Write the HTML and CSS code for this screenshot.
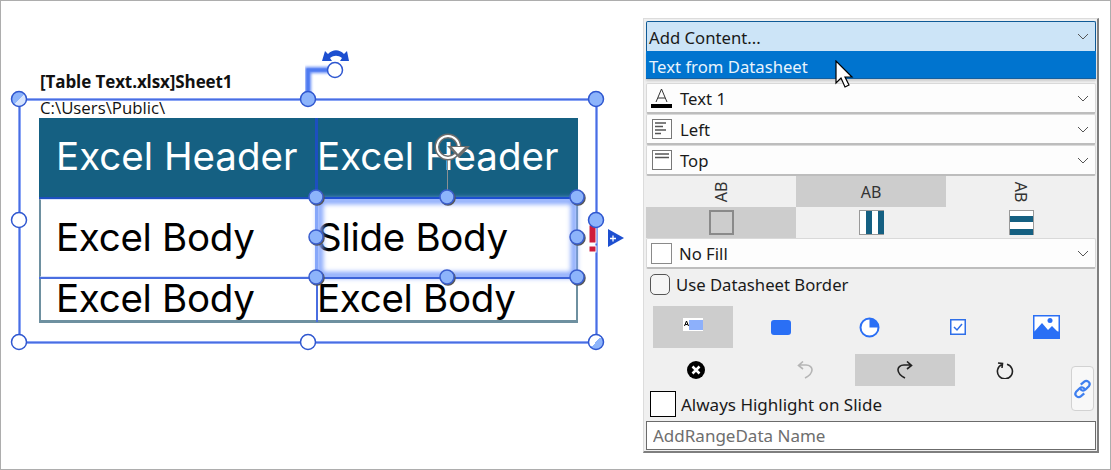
FILE: index.html
```html
<!DOCTYPE html>
<html lang="en">
<head>
    <meta charset="UTF-8">
    <meta name="viewport" content="width=device-width, initial-scale=1.0">
    <title>Table Text</title>
    <link rel="stylesheet" href="styles.css">
</head>
<body>
    <div class="page">
        <div class="slide">
            <div class="sheet-name">[Table Text.xlsx]Sheet1</div>
            <div class="sheet-path">C:\Users\Public\</div>
            <div class="sheet-table">
                <div class="cell head">Excel Header</div>
                <div class="cell head second">Excel Header</div>
                <div class="cell">Excel Body</div>
                <div class="cell second">Slide Body</div>
                <div class="cell short">Excel Body</div>
                <div class="cell short second">Excel Body</div>
            </div>

            <svg class="overlay" width="642" height="468" viewBox="0 0 642 468">
                <defs>
                    <filter id="soft" x="-10%" y="-30%" width="120%" height="160%"><feGaussianBlur stdDeviation="1.600"/></filter>
                    <filter id="softer" x="-10%" y="-30%" width="120%" height="160%"><feGaussianBlur stdDeviation="2.500"/></filter>
                    <linearGradient id="halfLight" x1="0" y1="0" x2="1" y2="1">
                        <stop offset="0.5" stop-color="#fff"/><stop offset="0.5" stop-color="#8db4fb"/>
                    </linearGradient>
                    <linearGradient id="halfBlue" x1="0" y1="0" x2="1" y2="1">
                        <stop offset="0.5" stop-color="#8db4fb"/><stop offset="0.5" stop-color="#d6e4fd"/>
                    </linearGradient>
                </defs>

                <!-- outer selection frame -->
                <rect x="19.500" y="99.500" width="577" height="243" fill="none" stroke="#8aa4f5" stroke-width="3"/>
                <rect x="19.500" y="99.500" width="577" height="243" fill="none" stroke="#4a6ee0" stroke-width="1"/>

                <!-- rotate connector -->
                <path d="M308 98V70H334" fill="none" stroke="#5d86f5" stroke-width="6" filter="url(#soft)"/>
                <path d="M308 98V70H334" fill="none" stroke="#4f7bf0" stroke-width="3"/>

                <!-- table row lines drawn by the selection -->
                <rect x="39" y="197" width="278" height="2" fill="#1d4fbf"/>
                <rect x="39" y="277" width="278" height="2" fill="#4a6ee0"/>
                <rect x="316" y="278" width="2" height="44" fill="#4a6ee0"/>

                <!-- selected cell -->
                <rect x="320" y="201" width="254" height="74" fill="none" stroke="#7fa2fc" stroke-width="6" filter="url(#softer)"/>
                <rect x="316" y="197" width="261" height="2" fill="#1d4fd0"/>
                <rect x="316" y="277" width="261" height="2" fill="#3c63d8"/>
                <rect x="315" y="118" width="3" height="80" fill="#1d4fbf"/>
                <rect x="315" y="198" width="3" height="80" fill="#86a7fa"/>

                <!-- cell rotate cursor -->
                <path d="M447.500 160V197" stroke="#8a8f92" stroke-width="1"/>
                <g fill="none">
                    <circle cx="448" cy="147" r="11" stroke="#6c6c6c" stroke-width="5"/>
                    <circle cx="448" cy="147" r="11" stroke="#fff" stroke-width="2"/>
                    <path d="M447 146H470L459 158Z" fill="#6c6c6c"/>
                    <path d="M452 147H465L458 154Z" fill="#fff"/>
                </g>

                <!-- warning mark and add arrow -->
                <rect x="589" y="225" width="7" height="18" fill="#cf1d3c" stroke="#fff" stroke-width="1"/>
                <rect x="589" y="246" width="7" height="6" fill="#cf1d3c" stroke="#fff" stroke-width="1"/>
                <path d="M608 229L624 238L608 247Z" fill="#1d4fd0"/>
                <path d="M610 238.500H616M613 235.500V241.500" stroke="#fff" stroke-width="1.300"/>

                <!-- rotate arrows -->
                <path d="M322 61L325 51L328 54C333 49 339 49 344 54L347 51L349 61H340L342 58C338 55 334 55 330 58L332 61Z" fill="#1d4fd0"/>

                <g class="h-cell">
                    <circle cx="316" cy="197" r="7"/><circle cx="447" cy="197" r="7"/><circle cx="577" cy="197" r="7"/>
                    <circle cx="316" cy="237" r="7"/><circle cx="577" cy="237" r="7"/>
                    <circle cx="316" cy="277" r="7"/><circle cx="447" cy="277" r="7"/><circle cx="577" cy="277" r="7"/>
                </g>
                <g class="h-frame">
                    <circle cx="308" cy="99" r="7.500"/><circle cx="596" cy="99" r="7.500"/><circle cx="596" cy="220" r="7.500"/>
                </g>
                <g class="h-white">
                    <circle cx="335" cy="70" r="7.500"/><circle cx="19" cy="220" r="7.500"/>
                    <circle cx="19" cy="342" r="7.500"/><circle cx="308" cy="342" r="7.500"/>
                </g>
                <circle class="h-line" cx="19" cy="99" r="7.500" fill="url(#halfBlue)"/>
                <circle class="h-line" cx="596" cy="342" r="7.500" fill="url(#halfLight)"/>
            </svg>
        </div>

        <div class="panel">
            <div class="combo open">
                <span class="combo-text">Add Content...</span>
                <svg class="chev" width="12" height="7" viewBox="0 0 12 7"><path d="M1 1L6 6L11 1"/></svg>
            </div>
            <div class="picked">Text from Datasheet</div>

            <div class="combo first">
                <svg class="combo-icon" width="22" height="22" viewBox="0 0 22 22">
                    <rect x="0" y="17" width="21" height="4" fill="#000"/>
                    <path d="M5 15L10.500 2L16 15M7 11H14" fill="none" stroke="#333" stroke-width="1"/>
                </svg>
                <span class="combo-text">Text 1</span>
                <svg class="chev" width="12" height="7" viewBox="0 0 12 7"><path d="M1 1L6 6L11 1"/></svg>
            </div>
            <div class="combo">
                <svg class="combo-icon" width="22" height="22" viewBox="0 0 22 22">
                    <rect x="1.500" y="1.500" width="19" height="19" fill="#fff" stroke="#777"/>
                    <path d="M4 5H15M4 8.500H12M4 12H15M4 15.500H10" stroke="#555" stroke-width="1.500"/>
                </svg>
                <span class="combo-text">Left</span>
                <svg class="chev" width="12" height="7" viewBox="0 0 12 7"><path d="M1 1L6 6L11 1"/></svg>
            </div>
            <div class="combo">
                <svg class="combo-icon" width="22" height="22" viewBox="0 0 22 22">
                    <rect x="1.500" y="1.500" width="19" height="19" fill="#fff" stroke="#777"/>
                    <path d="M4 5H18M4 8.500H18" stroke="#555" stroke-width="1.500"/>
                </svg>
                <span class="combo-text">Top</span>
                <svg class="chev" width="12" height="7" viewBox="0 0 12 7"><path d="M1 1L6 6L11 1"/></svg>
            </div>

            <div class="orient">
                <div class="orient-cell"><span class="turn-up">AB</span></div>
                <div class="orient-cell on"><span>AB</span></div>
                <div class="orient-cell"><span class="turn-down">AB</span></div>
                <div class="orient-cell on"><i class="swatch plain"></i></div>
                <div class="orient-cell"><i class="swatch cols"></i></div>
                <div class="orient-cell"><i class="swatch rows"></i></div>
            </div>

            <div class="combo">
                <i class="fill-box"></i>
                <span class="combo-text">No Fill</span>
                <svg class="chev" width="12" height="7" viewBox="0 0 12 7"><path d="M1 1L6 6L11 1"/></svg>
            </div>

            <label class="border-check"><i class="check-round"></i>Use Datasheet Border</label>

            <div class="tools">
                <div class="tool on">
                    <svg width="20" height="13" viewBox="0 0 20 13"><rect width="20" height="13" fill="#fff"/><rect x="6" y="2" width="14" height="10" fill="#8db0fb"/><path d="M1.500 8L3.500 3L5.500 8M2.300 6.500H4.700" fill="none" stroke="#000" stroke-width="1"/></svg>
                </div>
                <div class="tool"><svg width="20" height="15" viewBox="0 0 20 15"><rect width="20" height="15" rx="3" fill="#2a6ff5"/></svg></div>
                <div class="tool">
                    <svg width="21" height="21" viewBox="0 0 21 21"><circle cx="10.500" cy="10.500" r="9" fill="#fff" stroke="#2a6ff5" stroke-width="2"/><path d="M10.500 10.500V1.500A9 9 0 0 1 19.500 10.500Z" fill="#2a6ff5"/></svg>
                </div>
                <div class="tool">
                    <svg width="16" height="16" viewBox="0 0 16 16"><rect x="0.750" y="0.750" width="14.500" height="14.500" fill="#fff" stroke="#2f6fe8" stroke-width="1.500"/><path d="M4 8L7 11L12 5" fill="none" stroke="#2f6fe8" stroke-width="1.500"/></svg>
                </div>
                <div class="tool">
                    <svg width="27" height="24" viewBox="0 0 27 24"><rect width="27" height="24" fill="#2a6ff5"/><rect x="1.500" y="1.500" width="24" height="15" fill="#fff"/><circle cx="17" cy="5.500" r="2.500" fill="#2a6ff5"/><path d="M1 17L9 8L15 15L19 11L26 18V23H1Z" fill="#2a6ff5"/></svg>
                </div>
            </div>

            <div class="actions">
                <div class="action">
                    <svg width="18" height="18" viewBox="0 0 18 18"><circle cx="9" cy="9" r="9" fill="#000"/><path d="M5.500 5.500L12.500 12.500M12.500 5.500L5.500 12.500" stroke="#fff" stroke-width="2.500"/></svg>
                </div>
                <div class="action wide">
                    <svg width="16" height="18" viewBox="0 0 16 18"><path d="M2 4H9C13 4 15.200 6.500 15 9C14.800 12 12 15 8 17M6 0.500L1.500 4.500L6 8" fill="none" stroke="#b5b5b5" stroke-width="1.600"/></svg>
                </div>
                <div class="action wide on">
                    <svg width="16" height="18" viewBox="0 0 16 18"><path d="M14 4H7C3 4 0.800 6.500 1 9C1.200 12 4 15 8 17M10 0.500L14.500 4.500L10 8" fill="none" stroke="#222" stroke-width="1.600"/></svg>
                </div>
                <div class="action wide">
                    <svg width="18" height="18" viewBox="0 0 18 18"><path d="M6 3.500A7.500 7.500 0 1 0 11 3.200M2 2L6.500 2.500L6 7" fill="none" stroke="#222" stroke-width="1.600"/></svg>
                </div>
            </div>

            <div class="highlight-row">
                <i class="check-box"></i>
                <span>Always Highlight on Slide</span>
                <button class="link-btn">
                    <svg width="24" height="24" viewBox="0 0 24 24" fill="none" stroke="#3f7fef" stroke-width="2.500">
                        <path d="M10 7L14 3.500C17 1 22 5 19.500 8.500L15.500 12.500C13 15 10 13.500 9.500 11.500"/>
                        <path d="M14 17L10 20.500C7 23 2 19 4.500 15.500L8.500 11.500C11 9 14 10.500 14.500 12.500"/>
                    </svg>
                </button>
            </div>

            <input class="name-input" type="text" placeholder="AddRangeData Name">
        </div>

        <svg class="pointer" width="22" height="30" viewBox="0 0 22 30">
            <path d="M1 1V23L6 18L10 27L14 25L10 17H17Z" fill="#fff" stroke="#000" stroke-width="1.200"/>
        </svg>
    </div>
</body>
</html>
```

FILE: styles.css
```css
* {
    box-sizing: border-box;
}

body {
    margin: 0;
    background: #fff;
    font-family: "Noto Sans", "Open Sans", sans-serif;
    color: #1a1a1a;
}

.page {
    position: relative;
    display: flex;
    width: 1111px;
    height: 470px;
    border: 1px solid #adadad;
    overflow: hidden;
}

/* slide side */
.slide {
    position: relative;
    width: 642px;
    padding: 70px 0 0 38px;
}

.sheet-name {
    padding-left: 1px;
    font-family: "Open Sans", sans-serif;
    font-size: 17px;
    font-weight: 700;
    letter-spacing: -0.1px;
    line-height: 22px;
    color: #111;
}

.sheet-path {
    padding-left: 1px;
    font-family: "Open Sans", sans-serif;
    font-size: 16.800px;
    line-height: 22px;
    margin-top: 4px;
    height: 21px;
    color: #111;
}

.sheet-table {
    display: grid;
    grid-template-columns: 278px 261px;
    grid-template-rows: 80px 80px 45px;
    width: 539px;
    font-family: Inter, Roboto, sans-serif;
    font-size: 38.500px;
}

.cell {
    display: flex;
    align-items: center;
    padding: 0 0 3px 15px;
    letter-spacing: -0.3px;
    color: #000;
    border-left: 2px solid #6e90a0;
    border-top: 2px solid #d8e2fb;
    border-bottom: 2px solid #d8e2fb;
}

.cell.second {
    padding-left: 0;
    border-left: 0;
    border-right: 2px solid #6e90a0;
}

.cell.head {
    padding: 0 0 5px 17px;
    letter-spacing: 0;
    background: #156082;
    color: #fff;
    border: 0;
}

.cell.head.second {
    padding-left: 0;
}

.cell.short {
    border-top: 0;
    border-bottom: 3px solid #6e90a0;
}

.overlay {
    position: absolute;
    left: -1px;
    top: -1px;
}

.h-cell {
    filter: drop-shadow(1px 1px 0 #555);
}

.h-cell circle {
    fill: #8db4fb;
    stroke: #3b5fcf;
    stroke-width: 1.500;
}

.h-frame circle {
    fill: #8db4fb;
    stroke: #2f57d0;
    stroke-width: 1.500;
}

.h-white circle {
    fill: #fff;
    stroke: #2f57d0;
    stroke-width: 1.500;
}

.h-line {
    stroke: #2f57d0;
    stroke-width: 1.500;
}

/* task pane */
.panel {
    width: 456px;
    height: 435px;
    margin-top: 17px;
    padding: 2px;
    background: #f0f0f0;
    border: 1px solid #dcdcdc;
    border-right: 2px solid #7f7f7f;
    border-bottom: 2px solid #7f7f7f;
    font-size: 16.700px;
}

.combo {
    display: flex;
    align-items: center;
    gap: 7px;
    width: 450px;
    height: 31px;
    padding: 0 6px 0 4px;
    background: #fdfdfd;
    border: 1px solid #d9d9d9;
    border-bottom: 2px solid #bdbdbd;
    border-radius: 2px;
    line-height: 1;
}

.combo.open {
    height: 30px;
    padding-left: 2px;
    background: #cce4f7;
    border: 1px solid #0f5a96;
    border-bottom: 0;
    border-radius: 2px 2px 0 0;
}

.combo.open .combo-text {
    padding-top: 3px;
}

.combo.first {
    margin-top: 4px;
}

.combo-text {
    flex: 1;
    padding-top: 2px;
}

.combo-icon {
    flex: none;
}

.chev {
    flex: none;
    fill: none;
    stroke: #555;
    stroke-width: 1;
}

.picked {
    width: 450px;
    height: 28px;
    padding-left: 3px;
    background: #0074cf;
    border-bottom: 1px solid #155f9e;
    color: #e8f3fc;
    line-height: 31px;
    box-shadow: 0 2px 2px rgba(0, 0, 0, 0.15);
}

.orient {
    display: grid;
    grid-template-columns: repeat(3, 150px);
    grid-template-rows: 31px 31px;
}

.orient-cell {
    display: flex;
    align-items: center;
    justify-content: center;
    font-size: 16px;
    color: #333;
}

.orient-cell.on {
    background: #cdcdcd;
}

.turn-up {
    transform: rotate(-90deg);
}

.turn-down {
    transform: rotate(90deg);
}

.swatch {
    display: block;
    width: 25px;
    height: 25px;
    border: 1px solid #8a8a8a;
    background: #fff;
}

.swatch.plain {
    background: #cdcdcd;
    border: 2px solid #8a8a8a;
}

.swatch.cols {
    border: 1px solid #999;
    border-right: 0;
    background: linear-gradient(90deg, #fff 6px, #156082 6px, #156082 12px, #fff 12px, #fff 18px, #156082 18px);
}

.swatch.rows {
    border: 1px solid #999;
    border-bottom: 0;
    background: linear-gradient(180deg, #fff 5px, #156082 5px, #156082 11px, #fff 11px, #fff 18px, #156082 18px);
}

.fill-box {
    flex: none;
    width: 21px;
    height: 21px;
    background: #fff;
    border: 1px solid #8a8a8a;
}

.border-check {
    display: flex;
    align-items: center;
    gap: 6px;
    height: 36px;
    padding: 0 0 6px 4px;
}

.check-round {
    width: 20px;
    height: 21px;
    background: #f5f5f5;
    border: 1px solid #555;
    border-radius: 5px;
}

.tools {
    display: flex;
    justify-content: space-between;
    height: 42px;
    margin-top: 1px;
    padding-left: 7px;
    padding-right: 9px;
}

.tool {
    display: flex;
    align-items: center;
    justify-content: center;
    width: 80px;
    height: 42px;
}

.tool.on {
    background: #cdcdcd;
}

.tool.on svg {
    margin-top: -6px;
}

.actions {
    display: flex;
    height: 32px;
    margin-top: 6px;
}

.action {
    display: flex;
    align-items: center;
    justify-content: center;
    width: 100px;
}

.action:first-child {
    width: 109px;
    padding-right: 9px;
}

.action.on {
    background: #cdcdcd;
}

.highlight-row {
    position: relative;
    display: flex;
    align-items: center;
    gap: 5px;
    height: 26px;
    margin-top: 5px;
    padding-left: 4px;
    font-size: 17px;
}

.check-box {
    width: 26px;
    height: 26px;
    background: #fff;
    border: 1px solid #000;
}

.link-btn {
    position: absolute;
    left: 425px;
    top: -25px;
    display: flex;
    align-items: center;
    justify-content: center;
    width: 23px;
    height: 45px;
    padding: 0;
    background: #f8f8f8;
    border: 1px solid #d2d2d2;
    border-radius: 4px;
}

.name-input {
    display: block;
    width: 450px;
    height: 29px;
    margin-top: 4px;
    padding: 0 6px;
    background: #fff;
    border: 1px solid #6b6b6b;
    font-family: inherit;
    font-size: 17px;
}

.name-input::placeholder {
    color: #6e6e6e;
    opacity: 1;
}

.pointer {
    position: absolute;
    left: 834px;
    top: 59px;
}
```
